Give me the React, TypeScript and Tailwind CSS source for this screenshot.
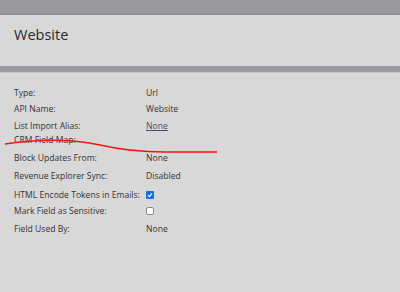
import React from 'react';

type Row = { label: string; value?: string; kind?: 'text' | 'link' | 'checked' | 'unchecked'; mt: string };

const rows: Row[] = [
  { label: 'Type:', value: 'Url', mt: 'mt-0' },
  { label: 'API Name:', value: 'Website', mt: 'mt-[2px]' },
  { label: 'List Import Alias:', value: 'None', kind: 'link', mt: 'mt-[3px]' },
  { label: 'CRM Field Map:', mt: 'mt-0' },
  { label: 'Block Updates From:', value: 'None', mt: 'mt-[4px]' },
  { label: 'Revenue Explorer Sync:', value: 'Disabled', mt: 'mt-[4px]' },
  { label: 'HTML Encode Tokens in Emails:', kind: 'checked', mt: 'mt-[5px]' },
  { label: 'Mark Field as Sensitive:', kind: 'unchecked', mt: 'mt-[2px]' },
  { label: 'Field Used By:', value: 'None', mt: 'mt-[4px]' },
];

function Value({ row }: { row: Row }) {
  if (row.kind === 'link') {
    return <span className="text-[#4a4a63] underline underline-offset-1">{row.value}</span>;
  }
  if (row.kind === 'checked') {
    return (
      <span className="flex h-[8px] w-[8px] items-center justify-center rounded-[1px] bg-[#1a6fe0]">
        <svg width="6" height="6" viewBox="0 0 6 6">
          <path d="M1 3.2 L2.4 4.6 L5 1.4" fill="none" stroke="#fff" strokeWidth="1.1" />
        </svg>
      </span>
    );
  }
  if (row.kind === 'unchecked') {
    return <span className="block h-[8px] w-[8px] rounded-[2px] border border-[#8a8a8a] bg-white" />;
  }
  return <span>{row.value}</span>;
}

export default function App() {
  return (
    <div className="relative h-[292px] w-[400px] overflow-hidden bg-[#d8d8d8] font-['Open_Sans',sans-serif]">
      <div className="h-[15px] border-b-2 border-[#8e8d92] bg-[#9a999e]" />
      <div className="h-[51px] pl-[14px] pt-[9px] text-[14.5px] text-[#2a2a2a]">Website</div>
      <div className="h-[7px] border-b border-[#c6c6c6] bg-[#9a999e]" />
      <div className="flex flex-col pt-[13px] text-[8.6px] text-[#333]">
        {rows.map((r) => (
          <div key={r.label} className={`flex h-[14px] items-center ${r.mt}`}>
            <span className="w-[146px] pl-[14px]">{r.label}</span>
            <Value row={r} />
          </div>
        ))}
      </div>
      <svg className="absolute left-0 top-0" width="400" height="292" viewBox="0 0 400 292">
        <path
          d="M5 144 Q 60 136 100 145 Q 130 152 165 152 L 217 152"
          fill="none"
          stroke="#ff1010"
          strokeWidth="1.4"
        />
      </svg>
    </div>
  );
}
